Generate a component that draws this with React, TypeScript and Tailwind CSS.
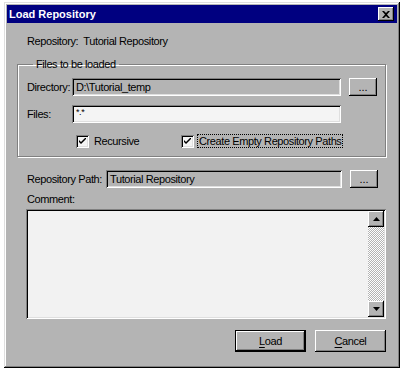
import React from 'react';

const font = "font-['Liberation_Sans',Arial,sans-serif] tracking-[-0.4px]";

const raised =
  'bg-[#b4b4b4] shadow-[inset_-1px_-1px_0_#000,inset_1px_1px_0_#fff,inset_-2px_-2px_0_#808080]';
const sunken =
  'shadow-[inset_1px_1px_0_#808080,inset_-1px_-1px_0_#fff,inset_2px_2px_0_#000,inset_-2px_-2px_0_#dfdfdf]';

const DotsButton = () => (
  <button className={`${raised} ml-[8px] flex h-[18px] w-[28px] shrink-0 items-end justify-center pb-[3px] text-[11px] leading-none tracking-normal text-black`}>
    ...
  </button>
);

const Check = () => (
  <span className={`${sunken} flex h-[13px] w-[13px] shrink-0 items-center justify-center bg-[#f4f4f4]`}>
    <svg width="7" height="7" viewBox="0 0 7 7">
      <path d="M0 2 L0 4 L2 6 L7 1 L7 -1 L2 4 Z" fill="#000" />
    </svg>
  </span>
);

const ScrollArrow = ({ down }: { down?: boolean }) => (
  <div className={`${raised} flex h-[16px] w-[16px] items-center justify-center`}>
    <svg width="7" height="4" viewBox="0 0 7 4">
      {down ? <path d="M0 0 L7 0 L3.5 4 Z" fill="#000" /> : <path d="M0 4 L7 4 L3.5 0 Z" fill="#000" />}
    </svg>
  </div>
);

export default function App() {
  return (
    <div className={`h-[378px] w-[406px] overflow-hidden bg-white pt-[2px] pl-[4px] ${font} text-[11px] leading-[12px] text-black`}>
      <div className="h-[366px] w-[396px] bg-[#b4b4b4] p-[3px] shadow-[inset_-1px_-1px_0_#000,inset_1px_1px_0_#dfdfdf,inset_-2px_-2px_0_#808080,inset_2px_2px_0_#fff]">
        {/* Title bar */}
        <div className="flex h-[18px] items-center justify-between bg-[#000080] pl-[2px] pr-[3px]">
          <span className="text-[11px] font-bold tracking-normal text-white">Load Repository</span>
          <button className={`${raised} flex h-[14px] w-[16px] items-center justify-center`}>
            <svg width="8" height="7" viewBox="0 0 8 7">
              <path d="M0 0 H2 L4 2 L6 0 H8 L5 3.5 L8 7 H6 L4 5 L2 7 H0 L3 3.5 Z" fill="#000" />
            </svg>
          </button>
        </div>

        <div className="pl-[20px] pt-[12px]">Repository:&nbsp; Tutorial Repository</div>

        {/* Files to be loaded */}
        <fieldset className="ml-[10px] mt-[11px] w-[369px] border border-[#808080] pb-[8px] pl-[9px] pt-[8px] shadow-[inset_1px_1px_0_#fff,1px_1px_0_#fff]">
          <legend className="ml-[6px] px-[3px] leading-[12px]">Files to be loaded</legend>
          <div className="flex h-[18px] items-center">
            <span className="w-[45px] shrink-0">Directory:</span>
            <div className={`${sunken} flex h-[18px] w-[269px] shrink-0 items-center bg-[#b4b4b4] pl-[4px]`}>D:\Tutorial_temp</div>
            <DotsButton />
          </div>
          <div className="mt-[9px] flex h-[18px] items-center">
            <span className="w-[45px] shrink-0">Files:</span>
            <div className={`${sunken} flex h-[18px] w-[269px] shrink-0 items-start bg-[#f4f4f4] pl-[4px] pt-[3px] text-[9px] leading-[8px]`}>*.*</div>
          </div>
          <div className="mt-[11px] flex h-[14px] items-center">
            <div className="ml-[49px] flex w-[105px] shrink-0 items-center">
              <Check />
              <span className="ml-[5px]">Recursive</span>
            </div>
            <div className="flex items-center">
              <Check />
              <span className="ml-[3px] whitespace-nowrap border border-dotted border-black px-[1px] leading-[12px]">Create Empty Repository Paths</span>
            </div>
          </div>
        </fieldset>

        {/* Repository path */}
        <div className="ml-[20px] mt-[13px] flex h-[18px] items-center">
          <span className="w-[79px] shrink-0 whitespace-nowrap">Repository Path:</span>
          <div className={`${sunken} flex h-[18px] w-[236px] shrink-0 items-center bg-[#b4b4b4] pl-[4px]`}>Tutorial Repository</div>
          <DotsButton />
        </div>

        <div className="ml-[20px] mt-[5px]">Comment:</div>

        <div className={`${sunken} ml-[19px] mt-[4px] flex h-[110px] w-[360px] bg-[#f2f2f2] p-[2px]`}>
          <div className="flex-1" />
          <div className="flex w-[16px] flex-col bg-[repeating-conic-gradient(#fff_0_25%,#b4b4b4_0_50%)] bg-[length:2px_2px]">
            <ScrollArrow />
            <div className="flex-1" />
            <ScrollArrow down />
          </div>
        </div>

        {/* Buttons */}
        <div className="mr-[11px] mt-[11px] flex justify-end gap-[9px]">
          <button className="h-[22px] w-[71px] bg-[#b4b4b4] shadow-[inset_0_0_0_1px_#000,inset_-2px_-2px_0_#000,inset_2px_2px_0_#fff,inset_-3px_-3px_0_#808080]">
            <span className="underline underline-offset-2">L</span>oad
          </button>
          <button className={`${raised} h-[22px] w-[71px]`}>
            <span className="underline underline-offset-2">C</span>ancel
          </button>
        </div>
      </div>
    </div>
  );
}
